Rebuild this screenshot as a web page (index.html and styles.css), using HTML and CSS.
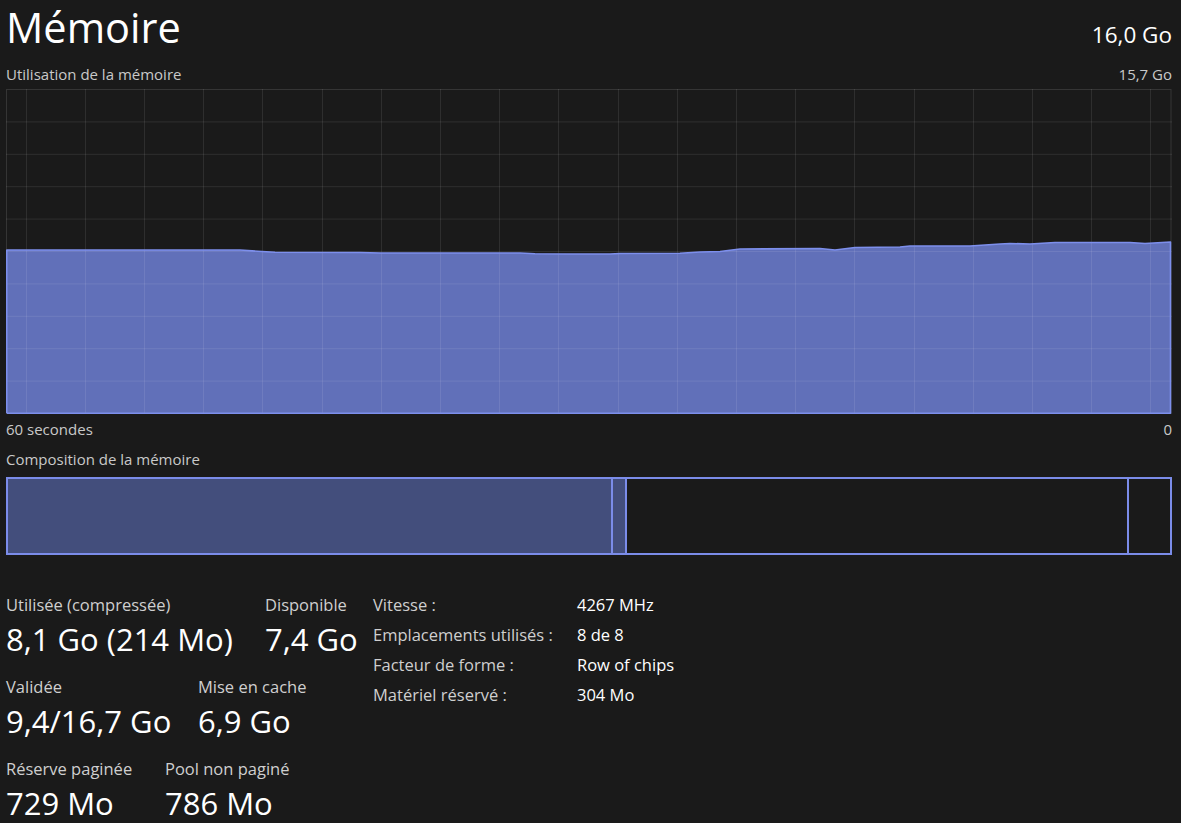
FILE: index.html
```html
<!DOCTYPE html>
<html lang="fr">
<head>
<meta charset="utf-8">
<title>Mémoire</title>
<link rel="stylesheet" href="styles.css">
</head>
<body>
<div class="page">
  <header class="head">
    <h1 class="title">Mémoire</h1>
    <div class="total">16,0 Go</div>
  </header>
  <div class="caption-row top-cap">
    <span>Utilisation de la mémoire</span>
    <span>15,7 Go</span>
  </div>
  <div class="graph">
    <svg viewBox="0 0 1166 325" preserveAspectRatio="none" width="1166" height="325">
      <polygon class="area" points="0.75,161 234,161 256,162.5 269,163.3 354,163.5 374,164 514,164 529,164.7 564,165 604,165 614,164.5 674,164.3 694,163 714,162.5 734,160 814,159.5 829,161 849,158.5 894,158 904,157 964,157 994,155 1004,154.5 1024,155 1049,153.5 1124,153.5 1139,154.5 1164.5,153 1164.5,324.2 0.75,324.2"/>
      <g class="grid">
        <line x1="20.5" y1="0" x2="20.5" y2="325"/>
        <line x1="79.5" y1="0" x2="79.5" y2="325"/>
        <line x1="138.5" y1="0" x2="138.5" y2="325"/>
        <line x1="197.5" y1="0" x2="197.5" y2="325"/>
        <line x1="256.5" y1="0" x2="256.5" y2="325"/>
        <line x1="316.5" y1="0" x2="316.5" y2="325"/>
        <line x1="375.5" y1="0" x2="375.5" y2="325"/>
        <line x1="434.5" y1="0" x2="434.5" y2="325"/>
        <line x1="493.5" y1="0" x2="493.5" y2="325"/>
        <line x1="552.5" y1="0" x2="552.5" y2="325"/>
        <line x1="612.5" y1="0" x2="612.5" y2="325"/>
        <line x1="671.5" y1="0" x2="671.5" y2="325"/>
        <line x1="730.5" y1="0" x2="730.5" y2="325"/>
        <line x1="789.5" y1="0" x2="789.5" y2="325"/>
        <line x1="848.5" y1="0" x2="848.5" y2="325"/>
        <line x1="908.5" y1="0" x2="908.5" y2="325"/>
        <line x1="967.5" y1="0" x2="967.5" y2="325"/>
        <line x1="1026.5" y1="0" x2="1026.5" y2="325"/>
        <line x1="1085.5" y1="0" x2="1085.5" y2="325"/>
        <line x1="1144.5" y1="0" x2="1144.5" y2="325"/>
        <line x1="0" y1="32.9" x2="1166" y2="32.9"/>
        <line x1="0" y1="65.3" x2="1166" y2="65.3"/>
        <line x1="0" y1="97.7" x2="1166" y2="97.7"/>
        <line x1="0" y1="130.1" x2="1166" y2="130.1"/>
        <line x1="0" y1="162.5" x2="1166" y2="162.5"/>
        <line x1="0" y1="194.9" x2="1166" y2="194.9"/>
        <line x1="0" y1="227.3" x2="1166" y2="227.3"/>
        <line x1="0" y1="259.7" x2="1166" y2="259.7"/>
        <line x1="0" y1="292.1" x2="1166" y2="292.1"/>
      </g>
      <rect class="frame" x="0.5" y="0.5" width="1164.5" height="324"/>
      <polyline class="edge" points="0.75,324 0.75,161 234,161 256,162.5 269,163.3 354,163.5 374,164 514,164 529,164.7 564,165 604,165 614,164.5 674,164.3 694,163 714,162.5 734,160 814,159.5 829,161 849,158.5 894,158 904,157 964,157 994,155 1004,154.5 1024,155 1049,153.5 1124,153.5 1139,154.5 1164.5,153 1164.5,324.2 0.75,324.2"/>
    </svg>
  </div>
  <div class="caption-row axis-cap">
    <span>60 secondes</span>
    <span>0</span>
  </div>
  <div class="caption-row comp-cap">
    <span>Composition de la mémoire</span>
  </div>
  <div class="comp">
    <div class="seg seg-used" style="width:603px"></div>
    <div class="seg seg-mod" style="width:14px"></div>
    <div class="seg seg-standby" style="width:502px"></div>
    <div class="seg seg-free"></div>
  </div>
  <section class="stats">
    <div class="stats-left">
      <div class="stat-row">
        <div class="stat w-used">
          <div class="stat-label">Utilisée (compressée)</div>
          <div class="stat-value">8,1 Go (214 Mo)</div>
        </div>
        <div class="stat">
          <div class="stat-label">Disponible</div>
          <div class="stat-value">7,4 Go</div>
        </div>
      </div>
      <div class="stat-row">
        <div class="stat w-valid">
          <div class="stat-label">Validée</div>
          <div class="stat-value">9,4/16,7 Go</div>
        </div>
        <div class="stat">
          <div class="stat-label">Mise en cache</div>
          <div class="stat-value">6,9 Go</div>
        </div>
      </div>
      <div class="stat-row">
        <div class="stat w-paged">
          <div class="stat-label">Réserve paginée</div>
          <div class="stat-value">729 Mo</div>
        </div>
        <div class="stat">
          <div class="stat-label">Pool non paginé</div>
          <div class="stat-value">786 Mo</div>
        </div>
      </div>
    </div>
    <dl class="props">
      <dt>Vitesse :</dt><dd>4267 MHz</dd>
      <dt>Emplacements utilisés :</dt><dd>8 de 8</dd>
      <dt>Facteur de forme :</dt><dd>Row of chips</dd>
      <dt>Matériel réservé :</dt><dd>304 Mo</dd>
    </dl>
  </section>
</div>
</body>
</html>
```
FILE: styles.css
```css
html, body {
  margin: 0;
  padding: 0;
  background: #1a1a1a;
  height: 100%;
  overflow: hidden;
}
body {
  font-family: "Open Sans", "Noto Sans", "Liberation Sans", sans-serif;
  color: #ffffff;
}
.page {
  padding: 4px 9px 0 6px;
}
.head {
  display: flex;
  justify-content: space-between;
  align-items: baseline;
  height: 48px;
}
.title {
  margin: 0;
  font-weight: 400;
  font-size: 41.5px;
  line-height: 46px;
}
.total {
  font-size: 22.5px;
  line-height: 28px;
}
.caption-row {
  display: flex;
  justify-content: space-between;
  font-size: 15px;
  line-height: 20px;
  color: #c9c9c9;
}
.top-cap { margin-top: 12px; }
.axis-cap { margin-top: 5px; }
.comp-cap { margin-top: 10px; }
.graph {
  margin-top: 5px;
  height: 325px;
}
.graph svg {
  display: block;
  width: 1166px;
  height: 325px;
}
.area {
  fill: #6170b9;
}
.grid line {
  stroke: rgba(255, 255, 255, 0.09);
  stroke-width: 1;
}
.frame {
  fill: none;
  stroke: rgba(255, 255, 255, 0.12);
  stroke-width: 1;
}
.edge {
  fill: none;
  stroke: #7d8fec;
  stroke-width: 1.6;
  stroke-linejoin: round;
}
.comp {
  margin-top: 8px;
  height: 78px;
  box-sizing: border-box;
  border: 2px solid #7b8ce9;
  display: flex;
}
.seg {
  height: 100%;
  box-sizing: border-box;
}
.seg + .seg {
  border-left: 2px solid #7b8ce9;
}
.seg-used, .seg-mod {
  background: #434e7c;
}
.seg-free {
  flex: 1;
}
.stats {
  margin-top: 39px;
  display: flex;
}
.stats-left {
  width: 367px;
  display: flex;
  flex-direction: column;
  gap: 19px;
}
.stat-row {
  display: flex;
}
.stat-label {
  font-size: 16.5px;
  line-height: 22px;
  color: #cfcfcf;
  white-space: nowrap;
}
.stat-value {
  margin-top: 6px;
  font-size: 31px;
  line-height: 35px;
  white-space: nowrap;
}
.w-used { width: 259px; }
.w-valid { width: 192px; }
.w-paged { width: 159px; }
.props {
  margin: 0;
  display: grid;
  grid-template-columns: 204px auto;
  row-gap: 8px;
  font-size: 16.5px;
  line-height: 22px;
  align-content: start;
}
.props dt {
  color: #cfcfcf;
  white-space: nowrap;
}
.props dd {
  margin: 0;
  white-space: nowrap;
}
```
